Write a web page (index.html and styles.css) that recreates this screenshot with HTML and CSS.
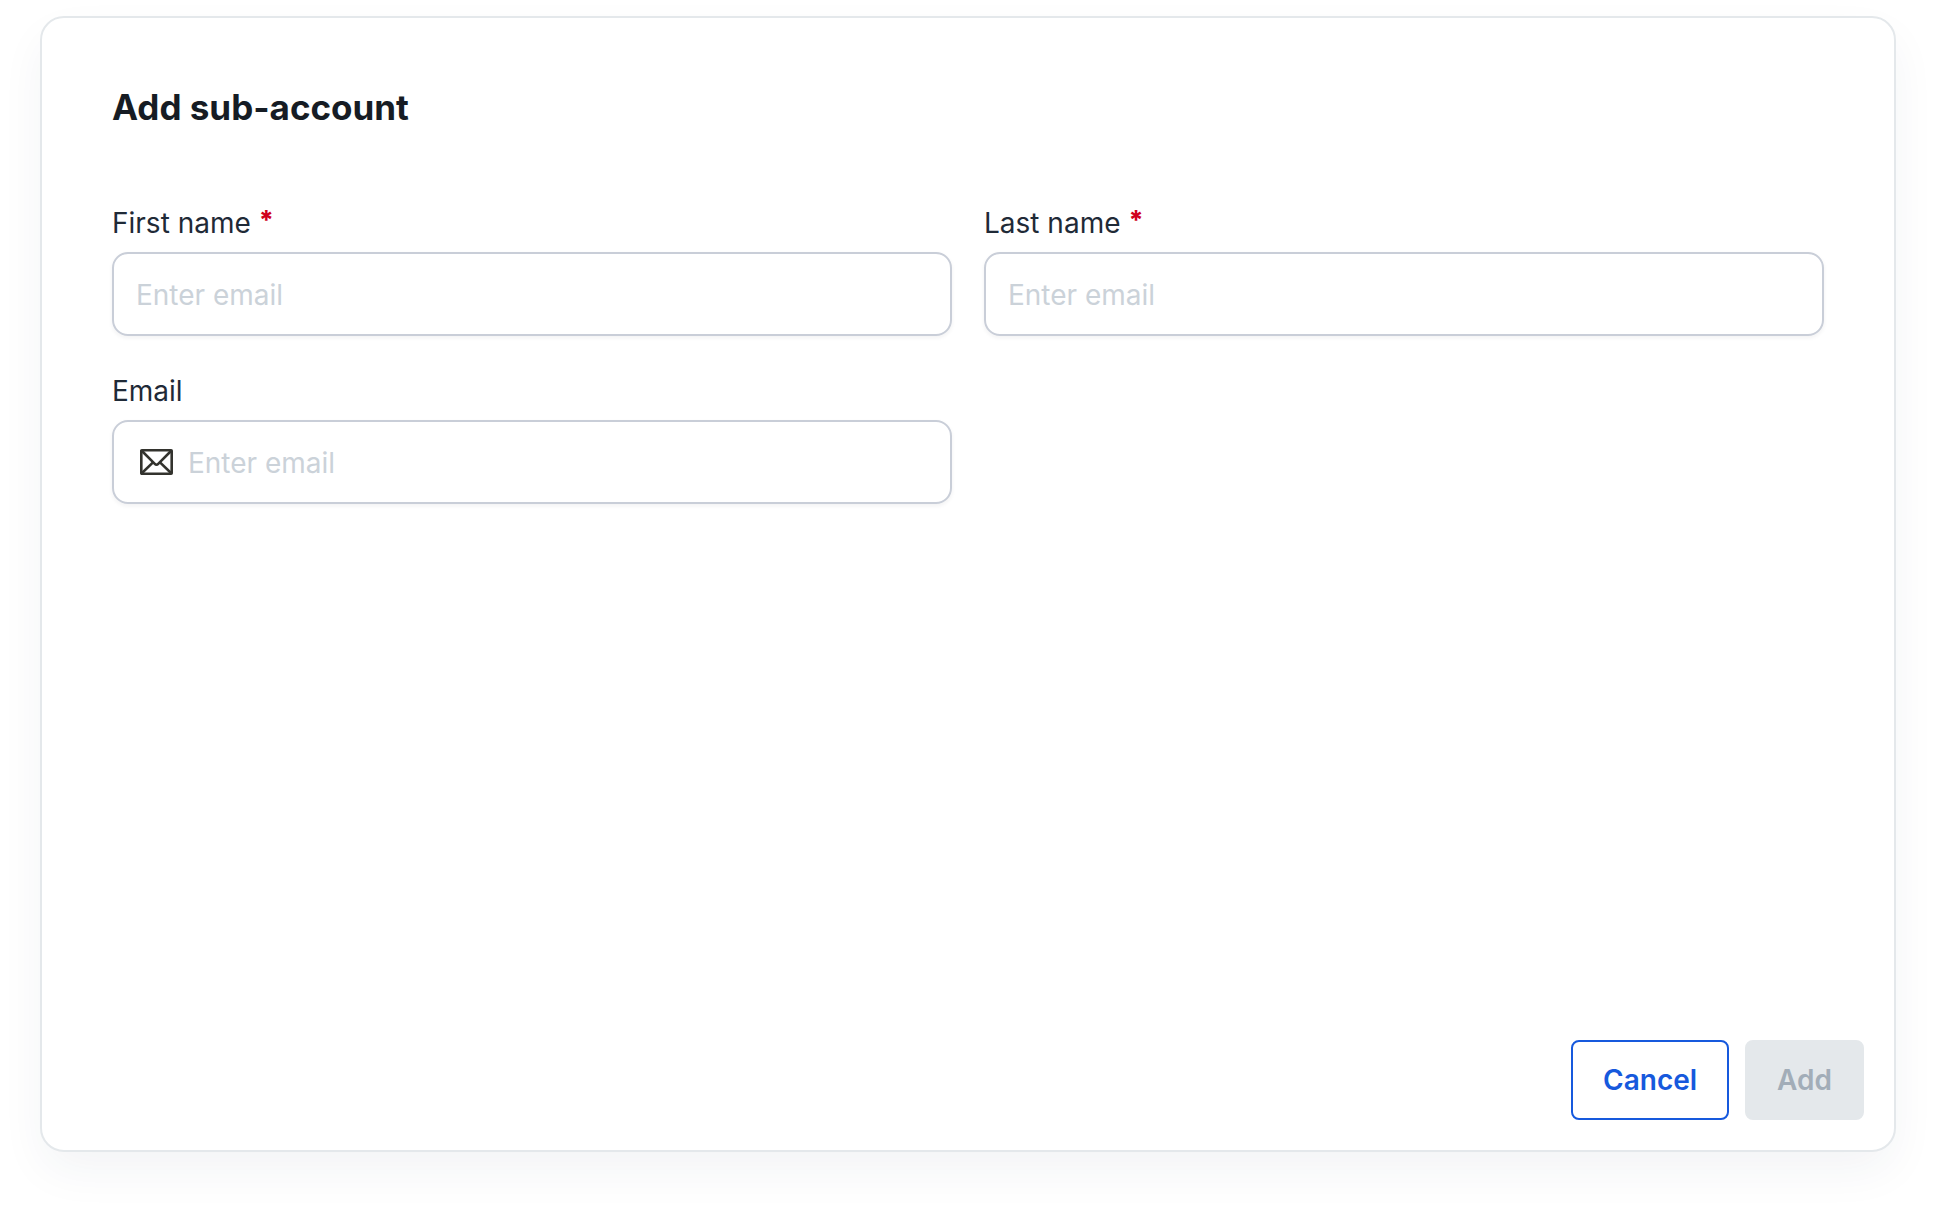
FILE: index.html
```html
<!DOCTYPE html>
<html lang="en">
<head>
    <meta charset="UTF-8">
    <meta name="viewport" content="width=device-width, initial-scale=1.0">
    <title>Add sub-account</title>
    <link rel="stylesheet" href="styles.css">
</head>
<body>
    <form class="card">
        <div class="card-body">
            <h1>Add sub-account</h1>
            <div class="form-grid">
                <div class="field">
                    <label for="first-name">First name <span class="required">*</span></label>
                    <div class="input-box">
                        <input type="text" id="first-name" placeholder="Enter email" required>
                    </div>
                </div>
                <div class="field">
                    <label for="last-name">Last name <span class="required">*</span></label>
                    <div class="input-box">
                        <input type="text" id="last-name" placeholder="Enter email" required>
                    </div>
                </div>
                <div class="field">
                    <label for="email">Email</label>
                    <div class="input-box with-icon">
                        <svg class="mail-icon" viewBox="0 0 33 26" fill="none" stroke="currentColor" stroke-width="2.6" stroke-linejoin="round" aria-hidden="true">
                            <rect x="1.3" y="1.3" width="30.4" height="23.4" rx="0.5"/>
                            <path d="M2 2 L14.8 14.8 Q16.5 16.6 18.2 14.8 L31 2"/>
                            <path d="M2 24 L13 13.4 M31 24 L20 13.4"/>
                        </svg>
                        <input type="email" id="email" placeholder="Enter email">
                    </div>
                </div>
            </div>
        </div>
        <div class="card-footer">
            <button type="button" class="btn btn-cancel">Cancel</button>
            <button type="submit" class="btn btn-add" disabled>Add</button>
        </div>
    </form>
</body>
</html>
```

FILE: styles.css
```css
* {
    box-sizing: border-box;
}

body {
    font-family: Inter, 'Liberation Sans', sans-serif;
    margin: 0;
    padding: 16px 40px 64px;
    background-color: #fff;
    color: #1f2a37;
    display: flex;
    flex-direction: column;
    min-height: 100vh;
}

.card {
    flex: 1;
    display: flex;
    flex-direction: column;
    justify-content: space-between;
    background: #fff;
    border: 2px solid #e4e8eb;
    border-radius: 24px;
    box-shadow: 0 20px 48px -4px rgba(31, 52, 85, 0.06);
}

.card-body {
    padding: 68px 70px 0;
}

h1 {
    margin: 0 0 76px;
    font-size: 35px;
    line-height: 42px;
    font-weight: 700;
    color: #161c24;
}

.form-grid {
    display: grid;
    grid-template-columns: 1fr 1fr;
    gap: 36px 32px;
}

.field label {
    display: block;
    padding-top: 2px;
    margin-bottom: 12px;
    font-size: 28px;
    line-height: 34px;
}

.required {
    color: #d0021b;
    font-size: 26px;
    line-height: 1;
    font-weight: 800;
    vertical-align: 4px;
}

.input-box {
    display: flex;
    align-items: center;
    gap: 16px;
    height: 84px;
    padding: 0 22px;
    border: 2px solid #c9ced8;
    border-radius: 16px;
    box-shadow: 0 2px 4px rgba(31, 42, 55, 0.06);
}

.input-box.with-icon {
    gap: 15px;
    padding-left: 26px;
}

.input-box input {
    flex: 1;
    min-width: 0;
    padding: 2px 0 0;
    border: none;
    outline: none;
    background: none;
    font-family: inherit;
    font-size: 28px;
    line-height: 36px;
    color: inherit;
}

.input-box input::placeholder {
    color: #cbd2d9;
    opacity: 1;
}

.mail-icon {
    width: 33px;
    height: 26px;
    color: #33332e;
}

.card-footer {
    display: flex;
    justify-content: flex-end;
    gap: 16px;
    padding: 30px;
}

.btn {
    height: 80px;
    padding: 0 30px;
    border: 2px solid transparent;
    border-radius: 8px;
    font-family: inherit;
    font-size: 28px;
    line-height: 36px;
    font-weight: 600;
    cursor: pointer;
}

.btn-cancel {
    background: #fff;
    border-color: #1659dd;
    color: #1659dd;
}

.btn-add {
    background: #e4e8eb;
    border-color: #e4e8eb;
    color: #a2adb8;
    cursor: default;
}
```
